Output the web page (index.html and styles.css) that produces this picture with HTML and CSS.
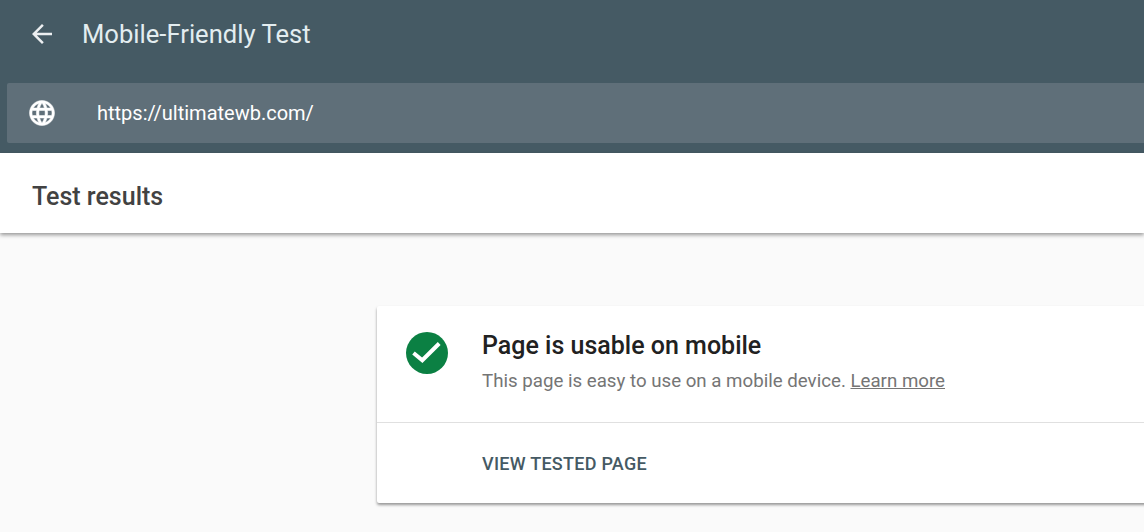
FILE: index.html
```html
<!DOCTYPE html>
<html lang="en">
<head>
	<meta charset="UTF-8">
	<title>Mobile-Friendly Test</title>
	<link rel="stylesheet" href="styles.css">
</head>
<body>
	<header class="header">
		<div class="topbar">
			<svg class="back" viewBox="0 0 24 24" width="30" height="30">
				<path d="M20 11H7.83l5.59-5.59L12 4l-8 8 8 8 1.41-1.41L7.83 13H20z"/>
			</svg>
			<h1 class="title">Mobile-Friendly Test</h1>
		</div>
		<div class="urlbar">
			<svg class="globe" viewBox="0 0 24 24" width="30" height="30">
				<path d="M11.99 2C6.47 2 2 6.48 2 12s4.47 10 9.99 10C17.52 22 22 17.52 22 12S17.52 2 11.99 2zm6.93 6h-2.95c-.32-1.25-.78-2.45-1.38-3.56 1.84.63 3.37 1.91 4.33 3.56zM12 4.04c.83 1.2 1.48 2.53 1.91 3.96h-3.82c.43-1.43 1.08-2.76 1.91-3.96zM4.26 14C4.1 13.36 4 12.69 4 12s.1-1.36.26-2h3.38c-.08.66-.14 1.32-.14 2 0 .68.06 1.34.14 2H4.26zm.82 2h2.95c.32 1.25.78 2.45 1.38 3.56-1.84-.63-3.37-1.9-4.33-3.56zm2.95-8H5.08c.96-1.66 2.49-2.93 4.33-3.56C8.81 5.55 8.35 6.75 8.03 8zM12 19.96c-.83-1.2-1.48-2.53-1.91-3.96h3.82c-.43 1.43-1.08 2.76-1.91 3.96zM14.34 14H9.66c-.09-.66-.16-1.32-.16-2 0-.68.07-1.35.16-2h4.68c.09.65.16 1.32.16 2 0 .68-.07 1.34-.16 2zm.25 5.56c.6-1.11 1.06-2.31 1.38-3.56h2.95c-.96 1.65-2.49 2.93-4.33 3.56zM16.36 14c.08-.66.14-1.32.14-2 0-.68-.06-1.34-.14-2h3.38c.16.64.26 1.31.26 2s-.1 1.36-.26 2h-3.38z"/>
			</svg>
			<span class="url">https://ultimatewb.com/</span>
		</div>
	</header>

	<div class="results-bar">
		<h2 class="results-title">Test results</h2>
	</div>

	<main class="content">
		<section class="card">
			<div class="card-top">
				<svg class="check" viewBox="0 0 42 42" width="42" height="42">
					<circle cx="21" cy="21" r="21" fill="#0b8043"/>
					<path d="M7.5 21l8.8 7.2L33.2 11.5" fill="none" stroke="#fff" stroke-width="4"/>
				</svg>
				<div class="card-text">
					<h3 class="card-title">Page is usable on mobile</h3>
					<p class="card-desc">This page is easy to use on a mobile device. <a href="#" class="learn">Learn more</a></p>
				</div>
			</div>
			<div class="card-action">VIEW TESTED PAGE</div>
		</section>
	</main>
</body>
</html>
```

FILE: styles.css
```css
*{
	margin:0;
	padding:0;
	box-sizing:border-box;
}
html,body{
	height:100%;
	overflow:hidden;
}
body{
	font-family:Roboto,"Liberation Sans",sans-serif;
	background:#fafafa;
}
.header{
	height:153px;
	background:#455a64;
	padding-top:2px;
}
.topbar{
	height:64px;
	display:flex;
	align-items:center;
	padding-left:27px;
}
.back{
	fill:#eceff1;
}
.title{
	margin-left:25px;
	font-size:25.6px;
	font-weight:400;
	color:#e3edf0;
}
.urlbar{
	height:60px;
	margin:17px 0 0 7px;
	background:#5f6f79;
	border-radius:2px 0 0 2px;
	display:flex;
	align-items:center;
	padding-left:20px;
}
.globe{
	fill:#fff;
	stroke:#fff;
	stroke-width:.4;
}
.url{
	margin-left:40px;
	font-size:20px;
	color:#fff;
}
.results-bar{
	height:80px;
	background:#fff;
	display:flex;
	align-items:center;
	padding:7px 0 0 32px;
	box-shadow:0 2px 4px rgba(0,0,0,.4);
	position:relative;
}
.results-title{
	font-size:25px;
	font-weight:500;
	color:#424242;
}
.content{
	padding:73px 0 0 377px;
}
.card{
	width:800px;
	height:197px;
	background:#fff;
	border-radius:2px;
	box-shadow:0 2px 3px rgba(0,0,0,.4);
}
.card-top{
	height:117px;
	border-bottom:1px solid #e0e0e0;
	display:flex;
	padding:26px 0 0 29px;
}
.card-text{
	margin-left:34px;
}
.card-title{
	font-size:25px;
	font-weight:500;
	line-height:28px;
	color:#212121;
}
.card-desc{
	margin-top:9px;
	font-size:18.7px;
	line-height:24px;
	color:#757575;
}
.learn{
	color:#757575;
}
.card-action{
	padding:30px 0 0 105px;
	font-size:18px;
	font-weight:500;
	line-height:21px;
	letter-spacing:.27px;
	color:#455a64;
}
```
